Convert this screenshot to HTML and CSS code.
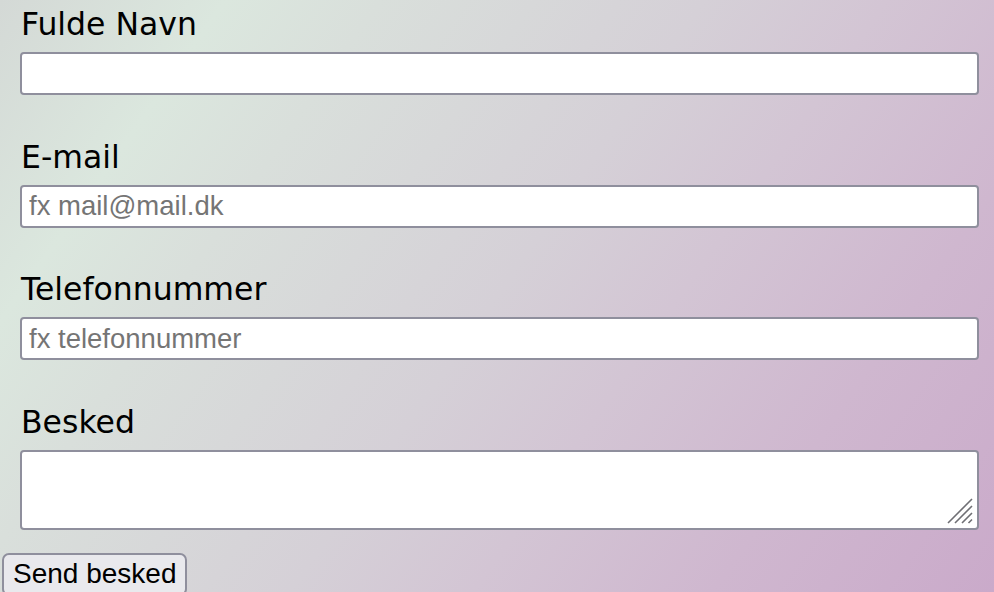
FILE: index.html
```html
<!DOCTYPE html>
<html lang="da">
<head>
  <meta charset="UTF-8" />
  <meta name="viewport" content="width=device-width, initial-scale=1.0" />
  <title>Kontakt</title>
  <link rel="stylesheet" href="styles.css">
</head>
<body>
  <form class="contact-form">
    <div class="field">
      <label for="name">Fulde Navn</label>
      <input type="text" id="name" />
    </div>
    <div class="field">
      <label for="email">E-mail</label>
      <input type="email" id="email" placeholder="fx mail@mail.dk" />
    </div>
    <div class="field">
      <label for="phone">Telefonnummer</label>
      <input type="tel" id="phone" placeholder="fx telefonnummer" />
    </div>
    <div class="field">
      <label for="message">Besked</label>
      <div class="textarea-wrap">
        <textarea id="message"></textarea>
        <svg class="grip" width="26" height="26" viewBox="0 0 26 26" aria-hidden="true">
          <path d="M1 25 L25 1 M8 25 L25 8 M15 25 L25 15 M21.5 25 L25 21.5" stroke="#6f6f74" stroke-width="1.6" fill="none" />
        </svg>
      </div>
    </div>
  </form>
  <button class="send-btn" type="submit">Send besked</button>
</body>
</html>
```

FILE: styles.css
```css
:root {
  --field-border: #8f8f9d;
  --placeholder: #757575;
}

* {
  box-sizing: border-box;
}

html, body {
  height: 100%;
}

body {
  margin: 0;
  overflow: hidden;
  font-family: "Liberation Sans", Arial, sans-serif;
  background: linear-gradient(125deg, #d4d9d6 0%, #dbe7de 16%, #d9dfdb 27%, #d7d8d9 38%, #d5d0d7 50%, #d3c5d4 63%, #cfb7cf 80%, #caaaca 100%);
}

.contact-form {
  padding: 0 15px 0 20px;
}

.field {
  margin-bottom: 37.5px;
}

.field:last-child {
  margin-bottom: 0;
}

label {
  display: block;
  font-family: "DejaVu Sans", sans-serif;
  font-size: 31.5px;
  line-height: 40px;
  color: #000;
  padding-top: 4px;
  margin-left: 1px;
  margin-bottom: 8px;
}

input,
textarea {
  display: block;
  width: 100%;
  height: 43px;
  font-family: "Liberation Sans", Arial, sans-serif;
  font-size: 27.5px;
  padding: 0 7px;
  background: #fff;
  border: 2px solid var(--field-border);
  border-radius: 4px;
  color: #000;
}

input::placeholder {
  color: var(--placeholder);
}

.textarea-wrap {
  position: relative;
  margin-top: 2px;
}

textarea {
  height: 80px;
  padding: 4px 7px;
  resize: none;
}

.grip {
  position: absolute;
  right: 6px;
  bottom: 6px;
}

.send-btn {
  display: block;
  margin: 23px 0 0 2px;
  height: 43px;
  padding: 0 9px;
  font-family: "Liberation Sans", Arial, sans-serif;
  font-size: 28px;
  color: #000;
  background: #e9e9ed;
  border: 2px solid var(--field-border);
  border-radius: 7px;
}
```
